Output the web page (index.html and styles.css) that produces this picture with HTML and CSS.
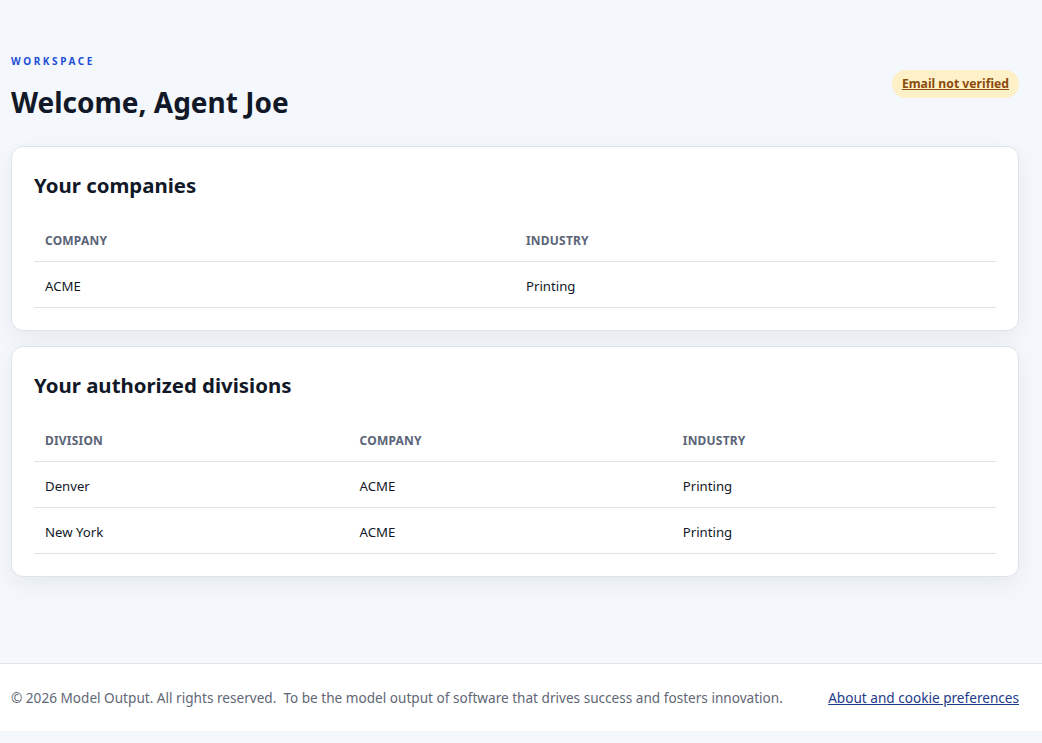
FILE: index.html
```html
<!DOCTYPE html>
<html lang="en">
<head>
<meta charset="utf-8">
<title>Workspace</title>
<link rel="stylesheet" href="styles.css">
</head>
<body>
<main class="page">
  <header class="page-head">
    <div class="head-text">
      <div class="eyebrow">Workspace</div>
      <h1 class="title">Welcome, Agent Joe</h1>
    </div>
    <a class="badge" href="#">Email not verified</a>
  </header>

  <section class="card">
    <h2 class="card-title">Your companies</h2>
    <table class="data">
      <thead>
        <tr><th class="half">Company</th><th class="half">Industry</th></tr>
      </thead>
      <tbody>
        <tr><td>ACME</td><td>Printing</td></tr>
      </tbody>
    </table>
  </section>

  <section class="card">
    <h2 class="card-title">Your authorized divisions</h2>
    <table class="data">
      <thead>
        <tr><th class="c-first">Division</th><th class="c-mid">Company</th><th>Industry</th></tr>
      </thead>
      <tbody>
        <tr><td>Denver</td><td>ACME</td><td>Printing</td></tr>
        <tr><td>New York</td><td>ACME</td><td>Printing</td></tr>
      </tbody>
    </table>
  </section>
</main>

<footer class="site-foot">
  <p class="foot-text">© 2026 Model Output. All rights reserved.&nbsp; To be the model output of software that drives success and fosters innovation.</p>
  <a class="foot-link" href="#">About and cookie preferences</a>
</footer>
</body>
</html>
```

FILE: styles.css
```css
* { box-sizing: border-box; }

html, body {
  margin: 0;
  padding: 0;
}

body {
  background: #f4f7fb;
  font-family: "Noto Sans", "Open Sans", sans-serif;
  color: #111827;
  padding-bottom: 12px;
}

.page {
  padding: 54px 23px 86px 11px;
  display: flex;
  flex-direction: column;
  gap: 15px;
}

.page-head {
  display: flex;
  align-items: flex-start;
  justify-content: space-between;
  margin-bottom: 11px;
}

.eyebrow {
  font-size: 10px;
  font-weight: 700;
  letter-spacing: 2.6px;
  text-transform: uppercase;
  color: #1d4ed8;
  line-height: 14px;
}

.title {
  margin: 16px 0 0;
  font-size: 28px;
  font-weight: 700;
  line-height: 36px;
  color: #111827;
}

.badge {
  display: inline-block;
  background: #fef0c7;
  color: #8a4b0c;
  font-size: 12.2px;
  font-weight: 700;
  line-height: 16px;
  padding: 6px 10px;
  border-radius: 999px;
  text-decoration: underline;
  margin-top: 16px;
}

.card {
  background: #ffffff;
  border: 1px solid #dde3ec;
  border-radius: 12px;
  box-shadow: 0 8px 24px rgba(15, 23, 42, 0.06);
  padding: 24px 22px 22px;
}

.card-title {
  margin: 0 0 20px;
  font-size: 20.4px;
  font-weight: 700;
  line-height: 28px;
  color: #111827;
}

.data {
  width: 100%;
  border-collapse: collapse;
  table-layout: fixed;
}

.data th {
  text-align: left;
  font-size: 12px;
  font-weight: 700;
  text-transform: uppercase;
  letter-spacing: 0.2px;
  color: #5b6477;
  padding: 12px 11px 10px;
  border-bottom: 1px solid #dfe3ea;
  line-height: 20px;
}

.data td {
  font-size: 13.2px;
  color: #111827;
  padding: 14px 11px 11px;
  border-bottom: 1px solid #dfe3ea;
  line-height: 20px;
}

.half { width: 50%; }
.c-first { width: 32.7%; }
.c-mid { width: 33.6%; }

.site-foot {
  background: #ffffff;
  border-top: 1px solid #dfe3ec;
  height: 68px;
  padding: 0 23px 0 11px;
  display: flex;
  align-items: center;
  justify-content: space-between;
  font-size: 13.6px;
}

.foot-text {
  margin: 0;
  color: #5f6776;
}

.foot-link {
  color: #1e3a8a;
  text-decoration: underline;
}
```
